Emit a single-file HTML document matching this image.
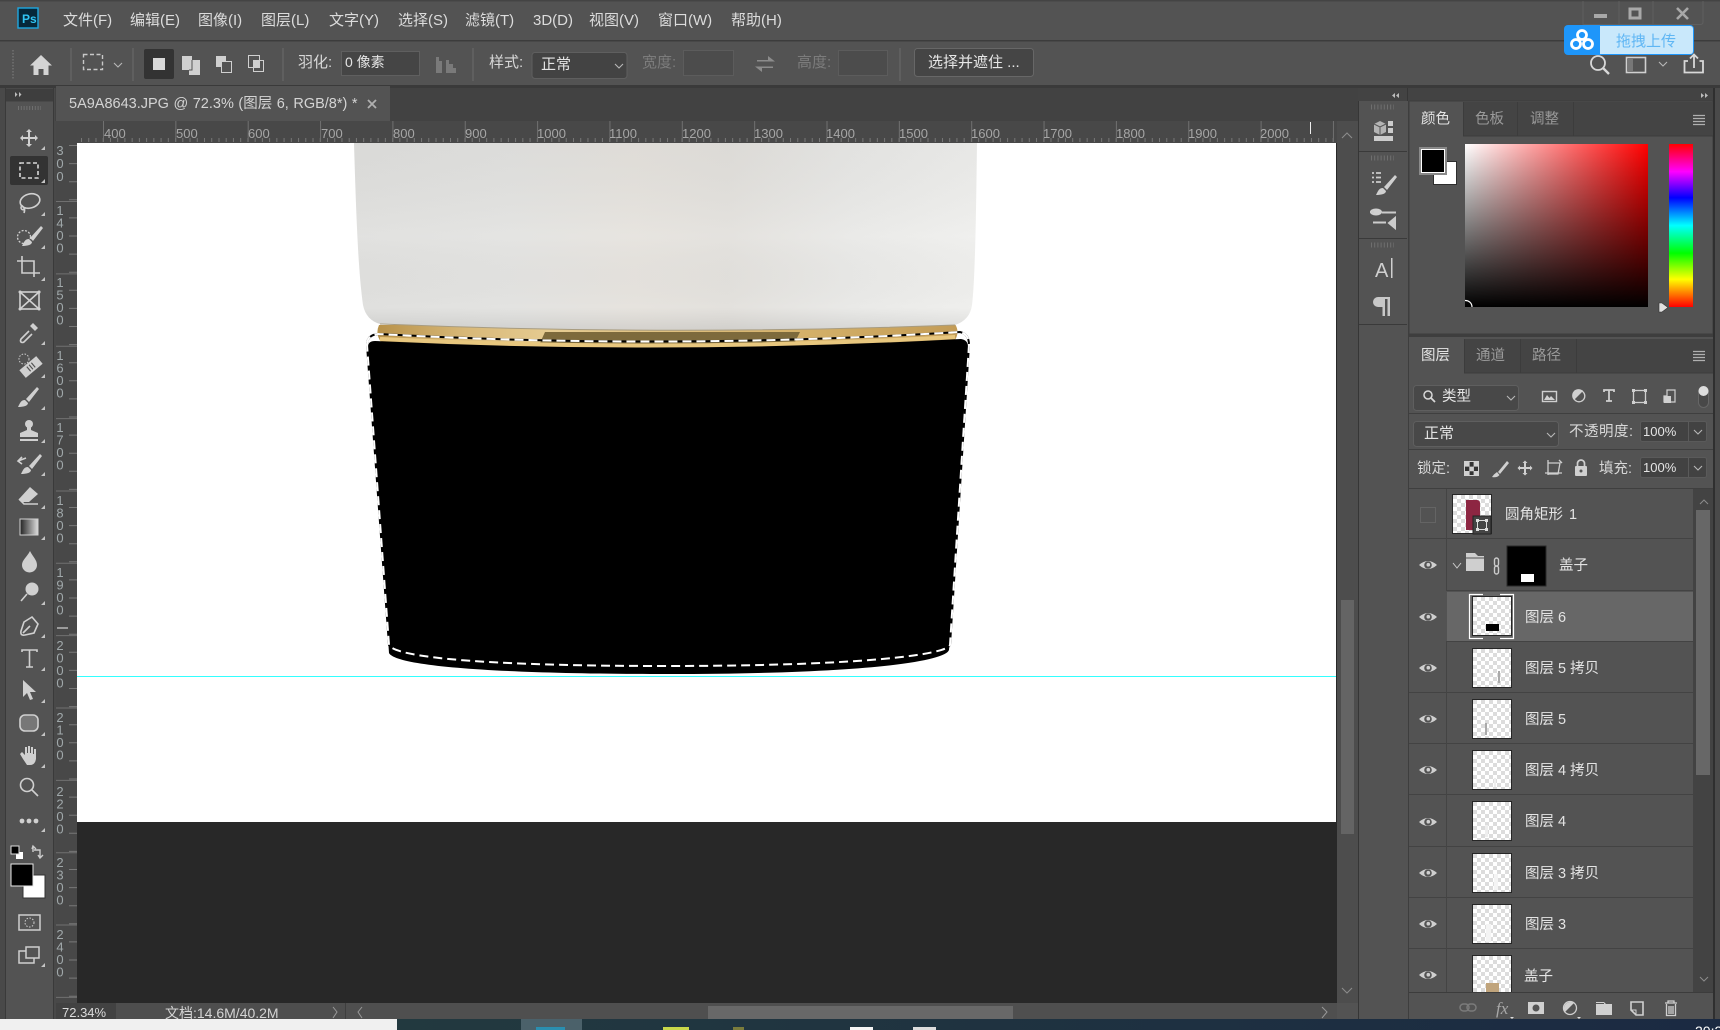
<!DOCTYPE html>
<html lang="zh"><head><meta charset="utf-8"><title>Photoshop</title>
<style>
html,body{margin:0;padding:0;background:#535353;width:1720px;height:1030px;overflow:hidden}
svg{display:block;font-family:"Liberation Sans","WenQuanYi Zen Hei","Noto Sans CJK SC",sans-serif}
.m{font-size:15px;fill:#dcdcdc}
.o{font-size:15px;fill:#d8d8d8}
.d{font-size:15px;fill:#7c7c7c}
.r{font-size:13px;fill:#a6a6a6}
.v{font-size:13px;fill:#a0a8aa;text-anchor:middle}
.l{font-size:14.5px;fill:#e4e4e4}
.tab{font-size:14.5px;fill:#9a9a9a}
.ic{fill:#d0d0d0}
.st{fill:none;stroke:#d0d0d0;stroke-width:1.6}
</style></head><body>
<svg width="1720" height="1030" viewBox="0 0 1720 1030" xmlns="http://www.w3.org/2000/svg">
<defs>
<pattern id="ck" width="8" height="8" patternUnits="userSpaceOnUse"><rect width="8" height="8" fill="#fff"/><rect width="4" height="4" fill="#dcdcdc"/><rect x="4" y="4" width="4" height="4" fill="#dcdcdc"/></pattern>
<linearGradient id="cup" x1="354" x2="977" y1="0" y2="0" gradientUnits="userSpaceOnUse"><stop offset="0" stop-color="#e0e0de"/><stop offset=".25" stop-color="#e3e3e1"/><stop offset=".45" stop-color="#e6e3de"/><stop offset=".6" stop-color="#e3e1dd"/><stop offset=".8" stop-color="#e9e9e7"/><stop offset="1" stop-color="#efefed"/></linearGradient>
<linearGradient id="shade" x1="0" x2="0" y1="143" y2="330" gradientUnits="userSpaceOnUse"><stop offset="0" stop-color="#000" stop-opacity=".03"/><stop offset=".5" stop-color="#fff" stop-opacity=".05"/><stop offset=".88" stop-color="#000" stop-opacity="0"/><stop offset="1" stop-color="#000" stop-opacity=".08"/></linearGradient>
<linearGradient id="gold" x1="379" x2="957" y1="0" y2="0" gradientUnits="userSpaceOnUse"><stop offset="0" stop-color="#b8924a"/><stop offset=".15" stop-color="#d8b878"/><stop offset=".3" stop-color="#e6cc92"/><stop offset=".7" stop-color="#d6b36c"/><stop offset="1" stop-color="#c39c56"/></linearGradient>
<linearGradient id="sat"><stop offset="0" stop-color="#fff"/><stop offset="1" stop-color="#f00"/></linearGradient>
<linearGradient id="val" x1="0" x2="0" y1="0" y2="1"><stop offset="0" stop-color="#000" stop-opacity="0"/><stop offset="1" stop-color="#000"/></linearGradient>
<linearGradient id="hue" x1="0" x2="0" y1="0" y2="1"><stop offset="0" stop-color="#f00"/><stop offset=".17" stop-color="#f0f"/><stop offset=".33" stop-color="#00f"/><stop offset=".5" stop-color="#0ff"/><stop offset=".67" stop-color="#0f0"/><stop offset=".83" stop-color="#ff0"/><stop offset="1" stop-color="#f00"/></linearGradient>
<linearGradient id="grad"><stop offset="0" stop-color="#222"/><stop offset="1" stop-color="#ddd"/></linearGradient>
<linearGradient id="task"><stop offset="0" stop-color="#22393f"/><stop offset="1" stop-color="#1b2a42"/></linearGradient>
<g id="tri"><path d="M4,0V4H0Z" fill="#c4c4c4"/></g>
<g id="eye"><path d="M-9,0Q0,-8 9,0Q0,8 -9,0Z" fill="#cfcfcf"/><circle r="3.8" fill="#535353"/><circle r="1.8" cx=".3" cy="-.3" fill="#cfcfcf"/></g>
<g id="brush"><path d="M10,-11L-1,1L2,4L12,-9Z" fill="#d0d0d0"/><path d="M-2,2C-6,2 -7,5 -9,9C-4,9 1,8 1,5Z" fill="#d0d0d0"/></g>
<g id="lth"><rect x="-1" y="-1" width="40" height="40" fill="#262626"/><rect width="38" height="38" x="0" y="0" fill="url(#ck)"/></g>
<g id="chev"><path d="M-4,-2L0,2L4,-2" fill="none" stroke="#b8b8b8" stroke-width="1.1"/></g>
<clipPath id="rows"><rect x="1409" y="489" width="284" height="503"/></clipPath>
<clipPath id="canvas"><rect x="77" y="143" width="1260" height="860"/></clipPath>
</defs>

<!-- base -->
<rect width="1720" height="1030" fill="#535353"/>
<rect y="40" width="1720" height="1.5" fill="#3c3c3c"/>
<rect y="85" width="1720" height="3" fill="#3a3a3a"/>
<rect x="0" y="0" width="1720" height="1.5" fill="#444"/>

<!-- menu -->
<rect x="18" y="8" width="20" height="20" fill="#06283a" stroke="#1fa7e0" stroke-width="1.4"/>
<text x="22" y="23" style="font-size:12px;fill:#31c5f4;font-weight:bold">Ps</text>
<text class="m" x="63" y="25">文件(F)</text>
<text class="m" x="130" y="25">编辑(E)</text>
<text class="m" x="198" y="25">图像(I)</text>
<text class="m" x="261" y="25">图层(L)</text>
<text class="m" x="329" y="25">文字(Y)</text>
<text class="m" x="398" y="25">选择(S)</text>
<text class="m" x="465" y="25">滤镜(T)</text>
<text class="m" x="533" y="25">3D(D)</text>
<text class="m" x="589" y="25">视图(V)</text>
<text class="m" x="658" y="25">窗口(W)</text>
<text class="m" x="731" y="25">帮助(H)</text>

<!-- window controls -->
<path d="M1583,1V24.5H1700Q1703,24.5 1703,22V1" fill="none" stroke="#5f5f5f"/>
<path d="M1619,1V24M1653,1V24" stroke="#5f5f5f"/>
<rect x="1594" y="14" width="13" height="4" fill="#a8a8a8"/>
<rect x="1630" y="9" width="10" height="9" fill="none" stroke="#a8a8a8" stroke-width="3"/>
<path d="M1677,8L1688,19M1688,8L1677,19" stroke="#a8a8a8" stroke-width="2.6"/>

<!-- options bar -->
<path d="M13,50v30" stroke="#6a6a6a" stroke-width="2" stroke-dasharray="1.5 1.5"/>
<path d="M41,55L30,65.5H33.5V75H38.5V69H43.5V75H48.5V65.5H52Z" fill="#d4d4d4"/>
<path d="M71,48V81M133,48V81M283,48V81M473,48V81M900,48V81" stroke="#6b6b6b"/>
<rect x="83.500" y="54.500" width="19" height="15" fill="none" stroke="#c8c8c8" stroke-width="1.4" stroke-dasharray="4 2.5"/>
<use href="#chev" x="118" y="65"/>
<rect x="144" y="49" width="30" height="30" rx="2" fill="#333"/>
<rect x="153" y="58" width="12" height="12" fill="#d8d8d8"/>
<path d="M182,56h10v4h8v15h-11v-5h-7z" fill="#d0d0d0"/><path d="M192,60v10h-3" fill="none" stroke="#535353"/>
<rect x="216" y="56" width="10" height="11" fill="#d0d0d0"/><rect x="221.500" y="61.500" width="10" height="11" fill="#535353" stroke="#d0d0d0"/>
<rect x="248.500" y="55.500" width="11" height="12" fill="none" stroke="#d0d0d0"/><rect x="253.500" y="60.500" width="10" height="11" fill="none" stroke="#d0d0d0"/><rect x="253.500" y="60.500" width="6" height="7" fill="#d0d0d0"/>
<text class="o" x="298" y="67">羽化:</text>
<rect x="341.500" y="51.500" width="78" height="24" fill="#454545" stroke="#5f5f5f"/>
<text x="345" y="67" style="font-size:14px;fill:#e4e4e4">0 像素</text>
<path d="M436,73V57H439V61H442V73ZM446,73V60H449V64H453V68H456V73Z" fill="#7a7a7a"/>
<text class="o" x="489" y="67">样式:</text>
<rect x="532" y="52.500" width="95" height="26" rx="3" fill="#434343" stroke="#5f5f5f"/>
<text x="541" y="69" style="font-size:15px;fill:#e4e4e4">正常</text>
<use href="#chev" x="619" y="66"/>
<text class="d" x="642" y="67">宽度:</text>
<rect x="683.500" y="50.500" width="50" height="25" fill="#4c4c4c" stroke="#5c5c5c"/>
<path d="M757,60H768V56L775,61.500H757ZM773,68H762V72L755,66.500H773Z" fill="#8c8c8c"/>
<text class="d" x="797" y="67">高度:</text>
<rect x="838.500" y="50.500" width="49" height="25" fill="#4c4c4c" stroke="#5c5c5c"/>
<rect x="914.500" y="48.500" width="119" height="28" rx="3" fill="#454545" stroke="#676767"/>
<text x="928" y="67" style="font-size:15px;fill:#e6e6e6">选择并遮住 ...</text>

<!-- right options icons -->
<circle cx="1598" cy="63" r="7" fill="none" stroke="#d8d8d8" stroke-width="1.8"/><path d="M1603,68L1609,74" stroke="#d8d8d8" stroke-width="2.4"/>
<rect x="1626.500" y="57.500" width="19" height="15" fill="none" stroke="#d0d0d0" stroke-width="1.6"/><rect x="1628" y="59" width="5" height="12" fill="#777"/>
<use href="#chev" x="1663" y="64"/>
<path d="M1688,61H1684.500V72.500H1703V61H1699.500M1694,68V55M1690,58.500L1694,54.500L1698,58.500" fill="none" stroke="#d8d8d8" stroke-width="1.8"/>

<!-- baidu widget -->
<rect x="1564" y="25" width="130" height="30" rx="4" fill="#1e96fa"/>
<path d="M1600,26H1690Q1693,26 1693,29V51Q1693,54 1690,54H1600Z" fill="#c9e8fb"/>
<g fill="none" stroke="#fff" stroke-width="2.8"><circle cx="1582" cy="35" r="4.500"/><circle cx="1576" cy="44" r="4.500"/><circle cx="1588" cy="44" r="4.500"/></g>
<text x="1616" y="46" style="font-size:15px;fill:#5fb6f4">拖拽上传</text>

<!-- left strip -->
<rect x="0" y="88" width="56" height="942" fill="#494949"/>
<rect x="6" y="89" width="47" height="12" fill="#3e3e3e"/>
<path d="M15,92l2.500,2.500l-2.500,2.500zM19,92l2.500,2.500l-2.500,2.500z" fill="#bdbdbd"/>
<rect x="6" y="102" width="47" height="918" fill="#535353"/>
<path d="M5.500,88V1020M53.500,88V1020" stroke="#3a3a3a"/>
<path d="M18,108H41" stroke="#6f6f6f" stroke-width="4" stroke-dasharray="1 1.800"/>

<!-- tabs -->
<rect x="55" y="88" width="1304" height="33" fill="#424242"/>
<rect x="56" y="86" width="334" height="35" fill="#535353"/>
<text x="69" y="108" style="font-size:14.5px;fill:#d4d4d4;word-spacing:.5px">5A9A8643.JPG @ 72.3% (图层 6, RGB/8*) *</text>
<path d="M368,100L376,108M376,100L368,108" stroke="#b0b0b0" stroke-width="1.8"/>

<!-- rulers -->
<rect x="56" y="121" width="1281" height="22" fill="#484848"/>
<rect x="56" y="143" width="21" height="860" fill="#484848"/>
<line x1="77" y1="140" x2="1337" y2="140" stroke="#777" stroke-width="4" stroke-dasharray="1 6.235" stroke-dashoffset="-4"/>
<line x1="103" y1="131.500" x2="1337" y2="131.500" stroke="#707070" stroke-width="21" stroke-dasharray="1 71.35"/>
<line x1="73" y1="143" x2="73" y2="1003" stroke="#777" stroke-width="8" stroke-dasharray="1 17.1" stroke-dashoffset="-2"/>
<line x1="66.500" y1="128.700" x2="66.500" y2="1003" stroke="#707070" stroke-width="21" stroke-dasharray="1 71.35"/>
<rect x="56" y="121" width="21" height="22" fill="#484848"/>
<g class="r">
<text class="r" x="104" y="138">400</text><text class="r" x="176" y="138">500</text><text class="r" x="248" y="138">600</text><text class="r" x="321" y="138">700</text><text class="r" x="393" y="138">800</text><text class="r" x="465" y="138">900</text><text class="r" x="537" y="138">1000</text><text class="r" x="609" y="138">1100</text><text class="r" x="682" y="138">1200</text><text class="r" x="754" y="138">1300</text><text class="r" x="826" y="138">1400</text><text class="r" x="899" y="138">1500</text><text class="r" x="971" y="138">1600</text><text class="r" x="1043" y="138">1700</text><text class="r" x="1116" y="138">1800</text><text class="r" x="1188" y="138">1900</text><text class="r" x="1260" y="138">2000</text>
</g>
<rect x="1310" y="122" width="1" height="12" fill="#eee"/>
<text class="v" x="60 60 60" y="155 168 181">300</text>
<text class="v" x="60 60 60 60" y="215 227.500 240 252.500">1400</text>
<text class="v" x="60 60 60 60" y="287 299.500 312 324.500">1500</text>
<text class="v" x="60 60 60 60" y="360 372.500 385 397.500">1600</text>
<text class="v" x="60 60 60 60" y="432 444.500 457 469.500">1700</text>
<text class="v" x="60 60 60 60" y="505 517.500 530 542.500">1800</text>
<text class="v" x="60 60 60 60" y="577 589.500 602 614.500">1900</text>
<text class="v" x="60 60 60 60" y="650 662.500 675 687.500">2000</text>
<text class="v" x="60 60 60 60" y="722 734.500 747 759.500">2100</text>
<text class="v" x="60 60 60 60" y="796 808.500 821 833.500">2200</text>
<text class="v" x="60 60 60 60" y="867 879.500 892 904.500">2300</text>
<text class="v" x="60 60 60 60" y="939 951.500 964 976.500">2400</text>
<rect x="57" y="627.500" width="11" height="1" fill="#eee"/>

<!-- canvas -->
<rect x="77" y="143" width="1260" height="860" fill="#282828"/>
<rect x="77" y="143" width="1259" height="679" fill="#fff"/>
<g clip-path="url(#canvas)">
<path d="M379,325Q375,334 381,342Q667,358 955,340Q960,332 955,324Z" fill="url(#gold)"/>
<path d="M545,332H800L795,342Q667,346 540,343Z" fill="#7d6a3c"/>
<path d="M354,143H977C976,220 975,280 972,305Q970,320 955,325Q667,336 380,324Q366,320 363,305C358,270 356,210 354,143Z" fill="url(#cup)"/>
<path d="M354,143H977C976,220 975,280 972,305Q970,320 955,325Q667,336 380,324Q366,320 363,305C358,270 356,210 354,143Z" fill="url(#shade)"/>
<path d="M380,324Q667,336 955,325" fill="none" stroke="#a89c80" stroke-width="1"/>
<path d="M380,339Q667,353 955,337" fill="none" stroke="#e8c77e" stroke-width="4"/>
<path d="M368,347Q368,341 375,341Q667,355 961,339Q968,340 968,347L949,650C945,662 860,674 667,674C480,674 395,665 389,653Z" fill="#000"/>
<path d="M367,345Q367,335 378,334Q667,350 960,332Q969,334 969,345L950,645C946,655 860,666 667,666C480,666 395,657 389,645Z" fill="none" stroke="#000" stroke-width="2"/>
<path d="M367,345Q367,335 378,334Q667,350 960,332Q969,334 969,345L950,645C946,655 860,666 667,666C480,666 395,657 389,645Z" fill="none" stroke="#fff" stroke-width="2" stroke-dasharray="9 5"/>
<rect x="77" y="676" width="1259" height="1" fill="#33ffff"/>
</g>

<!-- tools -->
<g>
<path transform="translate(29,138)" d="M0,-9L3,-6H1V-1H6V-3L9,0L6,3V1H1V6H3L0,9L-3,6H-1V1H-6V3L-9,0L-6,-3V-1H-1V-6H-3Z" class="ic"/><use href="#tri" x="41" y="146"/>
<rect x="10" y="156" width="38" height="29" rx="2" fill="#333"/>
<rect x="20" y="163" width="18" height="15" fill="none" stroke="#d8d8d8" stroke-width="1.6" stroke-dasharray="4 2.500"/><use href="#tri" x="41" y="179"/>
<ellipse cx="30" cy="201" rx="10" ry="7" transform="rotate(-15 30 201)" class="st"/><path d="M21,205Q26,208 24,213M22,206a2,2 0 1,0 3,2" class="st"/><use href="#tri" x="41" y="212"/>
<circle cx="24" cy="237" r="6.500" fill="none" stroke="#d0d0d0" stroke-width="1.3" stroke-dasharray="2 1.500"/><use href="#brush" x="31" y="237"/><use href="#tri" x="41" y="245"/>
<path d="M17,261H34V277M22,256V273H40" class="st" stroke-width="2"/><use href="#tri" x="41" y="277"/>
<rect x="20" y="292" width="19" height="17" class="st"/><path d="M20,292L39,309M39,292L20,309" class="st"/><path d="M20,292h.1M39,292h.1M20,309h.1M39,309h.1" stroke="#d0d0d0" stroke-width="3" stroke-linecap="round"/>
<path d="M29,331L21,339Q20,341 21,342Q22,343 24,342L32,334" class="st"/><path d="M33,323l5,5-3,3-5-5z" class="ic"/><use href="#tri" x="41" y="341"/>
<path transform="translate(31,367) rotate(-40)" d="M-11,-5H11V5H-11Z" class="ic"/><path transform="translate(31,367) rotate(-40)" d="M-3,-3V3M0,-3V3M3,-3V3" stroke="#535353" stroke-width="1.200"/><circle cx="24" cy="359" r="5" fill="none" stroke="#d0d0d0" stroke-dasharray="1.500 1.500"/><use href="#tri" x="41" y="374"/>
<use href="#brush" x="27" y="398"/><use href="#tri" x="41" y="406"/>
<circle cx="29" cy="424" r="4" class="ic"/><path d="M27,427H31V430L38,433V437H20V433L27,430ZM20,439H38V441H20Z" class="ic"/><use href="#tri" x="41" y="439"/>
<use href="#brush" x="30" y="465"/><path d="M18,461L26,458M22,457L18,461L22,464" class="st"/><use href="#tri" x="41" y="472"/>
<path d="M30,487L38,494L29,502H22L19,499Z" class="ic"/><path d="M19,499L24,504H38" class="st"/><use href="#tri" x="41" y="505"/>
<rect x="20" y="519" width="18" height="16" fill="url(#grad)" stroke="#d0d0d0"/><use href="#tri" x="41" y="536"/>
<path d="M30,551C33,557 37,560 37,565A7.500,7.500 0 0,1 22,565C22,560 27,557 30,551Z" class="ic"/>
<circle cx="32" cy="589" r="6.500" class="ic"/><path d="M27,594L21,601" class="st" stroke-width="2.400"/><use href="#tri" x="41" y="601"/>
<path d="M32,617L38,624L34,633L25,635Q20,636 21,631L24,622Z" class="st"/><path d="M23,633L30,626" class="st"/><use href="#tri" x="41" y="634"/>
<path d="M22,652V650H37V652M29.500,650V667M26,667H33" class="st" stroke-width="2.200"/><use href="#tri" x="41" y="667"/>
<path d="M23,680V697L27,693L30,700L33,699L30,692H36Z" class="ic"/><use href="#tri" x="41" y="699"/>
<rect x="20" y="715" width="18" height="16" rx="5" fill="#777" stroke="#d0d0d0" stroke-width="1.600"/><use href="#tri" x="41" y="732"/>
<path d="M23,759L20,754L22,752L25,755V747H27V753H28V746H30V753H31V747H33V754H34V749H36V759Q35,765 30,765H27Z" class="ic"/><use href="#tri" x="41" y="764"/>
<circle cx="27" cy="785" r="6.500" class="st"/><path d="M32,790L38,796" class="st" stroke-width="2.400"/>
<circle cx="22" cy="821" r="2.400" class="ic"/><circle cx="29" cy="821" r="2.400" class="ic"/><circle cx="36" cy="821" r="2.400" class="ic"/><use href="#tri" x="41" y="828"/>
<rect x="16" y="852" width="7" height="7" fill="#fff"/><rect x="11" y="846" width="8" height="8" fill="#000" stroke="#ddd"/>
<path d="M34,850H40V857M33,846V852M32,849L33,846L36,849M38,855L40,858L43,855" fill="none" stroke="#ccc" stroke-width="1.400"/>
<rect x="23" y="875" width="22" height="23" fill="#fff" stroke="#333"/>
<rect x="11" y="864" width="22" height="22" fill="#000" stroke="#e8e8e8"/>
<rect x="19" y="915" width="21" height="15" fill="#555" stroke="#cfcfcf" stroke-width="1.500"/><circle cx="29.500" cy="922.500" r="4.500" fill="none" stroke="#d0d0d0" stroke-dasharray="1.500 1.500"/>
<rect x="19" y="951" width="15" height="12" fill="none" stroke="#cfcfcf" stroke-width="1.500"/><rect x="26" y="947" width="13" height="11" fill="#535353" stroke="#cfcfcf" stroke-width="1.500"/><use href="#tri" x="41" y="963"/>
</g>

<!-- vertical scrollbar -->
<rect x="1337" y="121" width="21" height="882" fill="#4d4d4d"/>
<path d="M1342,138L1347,133L1352,138M1342,988L1347,993L1352,988" fill="none" stroke="#8c8c8c" stroke-width="1.100"/>
<rect x="1341" y="600" width="13" height="234" fill="#646464"/>

<!-- status bar -->
<rect x="56" y="1003" width="60" height="16" fill="#424242"/>
<rect x="116" y="1003" width="230" height="16" fill="#4e4e4e"/>
<rect x="346" y="1003" width="1012" height="16" fill="#4f4f4f"/>
<rect x="345" y="1003" width="1" height="16" fill="#3e3e3e"/>
<text x="62" y="1017" style="font-size:13px;fill:#dcdcdc">72.34%</text>
<text x="165" y="1018" style="font-size:14px;fill:#d4d4d4">文档:14.6M/40.2M</text>
<path d="M333,1007L337,1012L333,1018M362,1007L358,1012L362,1018M1322,1007L1327,1012L1322,1018" fill="none" stroke="#999"/>
<rect x="708" y="1006" width="305" height="13" fill="#686868"/>
<rect x="1337" y="1003" width="21" height="16" fill="#535353"/>

<!-- right dock -->
<rect x="1358" y="88" width="362" height="13" fill="#434343"/>
<path d="M1399,93l-3,2.500l3,2.500zM1395,93l-3,2.500l3,2.500zM1701,93l3,2.500l-3,2.500zM1705,93l3,2.500l-3,2.500z" fill="#bdbdbd"/>
<path d="M1407.500,88V101" stroke="#363636"/>
<rect x="1358" y="101" width="1" height="918" fill="#363636"/>
<rect x="1408" y="101" width="1" height="918" fill="#3e3e3e"/>
<path d="M1359,151.500H1407M1359,238.500H1407M1359,324.500H1407" stroke="#3a3a3a"/>
<path d="M1371,107H1394M1371,158H1394M1371,245H1394" stroke="#6f6f6f" stroke-width="5" stroke-dasharray="1 2.200"/>
<path d="M1380,121L1386,124V132L1380,135L1374,132V124Z" fill="#b4b4b4"/><path d="M1374,124L1380,127L1386,124M1380,127V135" fill="none" stroke="#535353"/><rect x="1388" y="121" width="5" height="5" fill="#ccc"/><rect x="1388" y="128" width="5" height="5" fill="#ccc"/><rect x="1374" y="136" width="19" height="5" fill="#ccc"/>
<path d="M1372,173h2M1376,173h5M1372,177.500h2M1376,177.500h5M1372,182h2M1376,182h5" stroke="#ccc" stroke-width="1.800"/><use href="#brush" x="1385" y="186"/>
<ellipse cx="1376" cy="212" rx="6" ry="3.500" class="ic"/><path d="M1370,212H1374M1382,212.500H1396" stroke="#ccc" stroke-width="2" fill="none"/><path d="M1373,222.500H1386M1389,223L1395,218V228Z" stroke="#ccc" stroke-width="2" fill="#ccc"/>
<text x="1375" y="277" style="font-size:20px;fill:#cfcfcf">A</text><rect x="1391" y="258" width="1.500" height="20" fill="#cfcfcf"/>
<path d="M1378,297H1390V316H1387.500V299H1385V316H1382.500V307H1378A5,5 0 0,1 1378,297Z" fill="#c8c8c8"/>

<!-- color panel -->
<rect x="1409" y="101" width="304" height="233" fill="#535353" stroke="#3e3e3e"/>
<rect x="1463" y="102" width="250" height="34" fill="#444"/>
<path d="M1463.500,102V136M1517.500,102V136M1573.500,102V136" stroke="#3c3c3c"/>
<rect x="1463" y="135.500" width="250" height="1" fill="#3c3c3c"/>
<text class="l" x="1421" y="123.500">颜色</text>
<text class="tab" x="1475" y="123.500">色板</text>
<text class="tab" x="1530" y="123.500">调整</text>
<path d="M1693,115.500H1705M1693,118.500H1705M1693,121.500H1705M1693,124.500H1705" stroke="#b0b0b0" stroke-width="1.200"/>
<rect x="1433.500" y="161.500" width="23" height="23" fill="#fff" stroke="#2d2d2d"/>
<rect x="1419" y="147" width="28" height="28" fill="#8a8a8a"/>
<rect x="1421.500" y="149.500" width="23" height="23" fill="#000" stroke="#fff"/>
<rect x="1465" y="144" width="183" height="163" fill="url(#sat)"/>
<rect x="1465" y="144" width="183" height="163" fill="url(#val)"/>
<path d="M1465,300.500A6.500,6.500 0 0,1 1472,307" fill="none" stroke="#fff" stroke-width="1.200"/>
<rect x="1669" y="144" width="24" height="163" fill="url(#hue)"/>
<path d="M1659,303H1662L1668,307.500L1662,312H1659Z" fill="#e0e0e0" stroke="#333" stroke-width=".6"/>

<rect x="1409" y="334" width="311" height="3" fill="#3e3e3e"/>

<!-- layers panel -->
<rect x="1409" y="338" width="304" height="681" fill="#535353"/>
<rect x="1464" y="339" width="249" height="34" fill="#444"/>
<path d="M1464.500,339V373M1520.500,339V373M1576.500,339V373" stroke="#3c3c3c"/>
<rect x="1464" y="372.500" width="249" height="1" fill="#3c3c3c"/>
<rect x="1713" y="88" width="2" height="931" fill="#2f2f2f"/><rect x="1715" y="88" width="5" height="942" fill="#4a4a4a"/>
<text class="l" x="1421" y="360">图层</text>
<text class="tab" x="1476" y="360">通道</text>
<text class="tab" x="1532" y="360">路径</text>
<path d="M1693,351.500H1705M1693,354.500H1705M1693,357.500H1705M1693,360.500H1705" stroke="#b0b0b0" stroke-width="1.200"/>

<!-- filter row -->
<rect x="1413.500" y="385.500" width="105" height="25" rx="3" fill="#484848" stroke="#5f5f5f"/>
<circle cx="1428" cy="395" r="4" fill="none" stroke="#d8d8d8" stroke-width="1.500"/><path d="M1431,398L1435,402" stroke="#d8d8d8" stroke-width="1.800"/>
<text class="l" x="1442" y="401">类型</text>
<use href="#chev" x="1511" y="398"/>
<rect x="1542.500" y="391.500" width="14" height="10" fill="none" stroke="#cfcfcf" stroke-width="1.400"/><path d="M1544,400L1547,395L1549.500,398L1551,396L1555,400Z" class="ic"/>
<circle cx="1579" cy="396" r="5.800" fill="none" stroke="#cfcfcf" stroke-width="1.300"/><path d="M1574,400A6,6 0 0,1 1583,391Z" class="ic"/>
<path d="M1604,392V390H1614V392M1609,390V401M1606,401H1612" fill="none" stroke="#cfcfcf" stroke-width="1.800"/>
<rect x="1633.500" y="390.500" width="12" height="12" fill="none" stroke="#cfcfcf" stroke-width="1.300"/><path d="M1632,389h3v3h-3zM1644,389h3v3h-3zM1632,401h3v3h-3zM1644,401h3v3h-3z" fill="#cfcfcf"/>
<path d="M1667,390H1675V402H1664V396H1667Z" fill="none" stroke="#cfcfcf" stroke-width="1.200"/><rect x="1664" y="396" width="7" height="7" class="ic"/>
<rect x="1698.500" y="386.500" width="10" height="21" rx="5" fill="#484848" stroke="#666"/><circle cx="1703.500" cy="391" r="5" fill="#ddd"/>
<path d="M1409,413.500H1713M1409,449.500H1713M1409,488.500H1713" stroke="#3f3f3f"/>

<!-- blend row -->
<rect x="1413.500" y="421.500" width="145" height="25" rx="3" fill="#484848" stroke="#5f5f5f"/>
<text class="l" x="1424" y="438" style="font-size:15px">正常</text>
<use href="#chev" x="1551" y="435"/>
<text class="o" x="1569" y="436" style="font-size:14.5px;letter-spacing:.5px">不透明度:</text>
<rect x="1640.500" y="421.500" width="66" height="20" rx="2" fill="#424242" stroke="#5a5a5a"/><path d="M1688.500,422V441" stroke="#5a5a5a"/>
<text x="1643" y="436" style="font-size:13px;fill:#e4e4e4">100%</text>
<use href="#chev" x="1698" y="432"/>

<!-- lock row -->
<text class="o" x="1417" y="473" style="font-size:14.5px">锁定:</text>
<rect x="1464.500" y="461.500" width="14" height="14" fill="#333" stroke="#d0d0d0"/><path d="M1465,462h4.600v4.600h-4.600zM1473.600,462h4.600v4.600h-4.600zM1469.300,466.600h4.600v4.600h-4.600zM1465,471h4.600v4.600h-4.600zM1473.600,471h4.600v4.600h-4.600z" fill="#d0d0d0"/>
<path d="M1507,461L1498,472L1500,474L1509,463ZM1497,472Q1494,474 1492,477Q1497,478 1499.500,475Z" class="ic"/>
<path transform="translate(1525,468)" d="M0,-7.500L2.500,-5H1V-1H5V-2.500L7.500,0L5,2.500V1H1V5H2.500L0,7.500L-2.500,5H-1V1H-5V2.500L-7.500,0L-5,-2.500V-1H-1V-5H-2.500Z" class="ic"/>
<path d="M1548,463H1560L1558,474H1548M1548,460V475M1545,473H1562M1559,460L1562,463" fill="none" stroke="#cfcfcf" stroke-width="1.300"/>
<rect x="1575" y="466" width="12" height="10" rx="1" class="ic"/><path d="M1577.500,466V463.500A3.500,3.500 0 0,1 1584.500,463.500V466" fill="none" stroke="#cfcfcf" stroke-width="1.700"/><circle cx="1581" cy="471" r="1.500" fill="#535353"/>
<text class="o" x="1599" y="473" style="font-size:14.5px">填充:</text>
<rect x="1640.500" y="457.500" width="66" height="20" rx="2" fill="#424242" stroke="#5a5a5a"/><path d="M1688.500,458V477" stroke="#5a5a5a"/>
<text x="1643" y="472" style="font-size:13px;fill:#e4e4e4">100%</text>
<use href="#chev" x="1698" y="468"/>

<!-- layer list -->
<rect x="1693" y="489" width="20" height="503" fill="#434343"/>
<path d="M1700,504L1704,500L1708,504M1700,977L1704,981L1708,977" fill="none" stroke="#8c8c8c"/>
<rect x="1696" y="510" width="14" height="265" fill="#676767"/>
<g clip-path="url(#rows)">
<rect x="1447" y="592" width="246" height="49" fill="#676767"/>
<path d="M1409,538.500H1693M1447,590.500H1693M1447,641.500H1693M1409,692.500H1693M1409,743.500H1693M1409,794.500H1693M1409,846.500H1693M1409,897.500H1693M1409,948.500H1693" stroke="#434343"/>
<path d="M1446.500,489V992" stroke="#444"/>
<rect x="1420.500" y="507.500" width="15" height="15" fill="none" stroke="#646464"/>
<use href="#lth" x="1453" y="495"/>
<path d="M1466,500H1477Q1480,500 1480,503V518L1477,530H1466Z" fill="#8d2642"/>
<rect x="1473" y="516" width="18" height="18" fill="#454545" stroke="#222"/><rect x="1477.500" y="520.500" width="9" height="9" fill="none" stroke="#ddd"/><path d="M1476,519h3v3h-3zM1485,519h3v3h-3zM1476,528h3v3h-3zM1485,528h3v3h-3z" fill="#ddd"/>
<text class="l" x="1505" y="519" style="word-spacing:2px">圆角矩形 1</text>

<use href="#eye" x="1428" y="565"/>
<path d="M1453,563L1457,568L1461,563" fill="none" stroke="#ccc"/>
<path d="M1466,553H1475L1478,556H1484V571H1466Z" fill="#cfcfcf"/><path d="M1466,558H1484" stroke="#535353"/>
<rect x="1494.500" y="558" width="4" height="8" rx="2" fill="none" stroke="#ccc" stroke-width="1.400"/><rect x="1494.500" y="566" width="4" height="8" rx="2" fill="none" stroke="#ccc" stroke-width="1.400"/>
<rect x="1507" y="546" width="39" height="40" fill="#000" stroke="#2a2a2a"/>
<rect x="1521" y="574" width="13" height="8" fill="#fff"/>
<text class="l" x="1559" y="570">盖子</text>

<rect x="1409" y="591" width="38" height="50" fill="#535353"/>
<use href="#eye" x="1428" y="617"/>
<use href="#lth" x="1473" y="597"/>
<rect x="1486" y="624" width="13" height="7" fill="#000"/>
<path d="M1483,594.500H1469.500V638.500H1483M1500,594.500H1513.500V638.500H1500" fill="none" stroke="#fff" stroke-width="1.200"/>
<text class="l" x="1525" y="622">图层 6</text>

<use href="#eye" x="1428" y="668"/>
<use href="#lth" x="1473" y="649"/>
<rect x="1498" y="671" width="2" height="12" fill="#aaa"/>
<text class="l" x="1525" y="673">图层 5 拷贝</text>

<use href="#eye" x="1428" y="719"/>
<use href="#lth" x="1473" y="700"/>
<rect x="1485" y="723" width="2" height="12" fill="#aaa"/>
<text class="l" x="1525" y="724">图层 5</text>

<use href="#eye" x="1428" y="770"/>
<use href="#lth" x="1473" y="751"/>
<rect x="1494" y="778" width="2" height="9" fill="#eee"/>
<text class="l" x="1525" y="775">图层 4 拷贝</text>

<use href="#eye" x="1428" y="822"/>
<use href="#lth" x="1473" y="802"/>
<rect x="1485" y="825" width="3" height="12" fill="#eee"/>
<text class="l" x="1525" y="826">图层 4</text>

<use href="#eye" x="1428" y="873"/>
<use href="#lth" x="1473" y="854"/>
<rect x="1494" y="874" width="4" height="16" fill="#f4f4f4"/>
<text class="l" x="1525" y="878">图层 3 拷贝</text>

<use href="#eye" x="1428" y="924"/>
<use href="#lth" x="1473" y="905"/>
<rect x="1486" y="924" width="5" height="18" fill="#f4f4f4"/>
<text class="l" x="1525" y="929">图层 3</text>

<use href="#eye" x="1428" y="975"/>
<use href="#lth" x="1473" y="956"/>
<rect x="1486" y="983" width="13" height="9" fill="#c0a47c"/>
<text class="l" x="1524" y="981">盖子</text>
</g>
<rect x="1409" y="992" width="304" height="1" fill="#3c3c3c"/>

<!-- layer footer -->
<rect x="1460" y="1004" width="9" height="7" rx="3.500" fill="none" stroke="#7b7b7b" stroke-width="1.500"/><rect x="1467" y="1004" width="9" height="7" rx="3.500" fill="none" stroke="#7b7b7b" stroke-width="1.500"/>
<text x="1496" y="1014" style="font-family:'Liberation Serif',serif;font-style:italic;font-size:17px;fill:#a8a8a8">fx</text>
<path d="M1510,1017h4l-2,2z" fill="#ddd"/>
<rect x="1528" y="1002" width="16" height="12" fill="#d0d0d0"/><circle cx="1536" cy="1008" r="3.500" fill="#535353"/>
<circle cx="1570" cy="1008" r="6.500" fill="none" stroke="#cfcfcf" stroke-width="1.300"/><path d="M1565,1012A6.500,6.500 0 0,1 1574,1003Z" class="ic"/>
<path d="M1577,1017h4l-2,2z" fill="#ddd"/>
<path d="M1596,1002H1604L1606,1004H1612V1015H1596Z" fill="#d0d0d0"/><path d="M1596,1003.500H1604" stroke="#535353"/>
<path d="M1631,1002H1643V1015H1636L1631,1010Z" fill="none" stroke="#d0d0d0" stroke-width="1.600"/><path d="M1631,1010H1636V1015" fill="none" stroke="#d0d0d0"/>
<path d="M1665,1003H1677M1668,1003V1001H1674V1003M1666.500,1004V1015.500H1675.500V1004M1669,1006V1014M1671,1006V1014M1673,1006V1014" fill="none" stroke="#d0d0d0" stroke-width="1.300"/>

<!-- taskbar -->
<rect y="1019" width="397" height="11" fill="#f0f0f0"/>
<rect x="397" y="1019" width="1323" height="11" fill="url(#task)"/>
<rect x="521" y="1019" width="61" height="11" fill="#4b616a"/>
<rect x="536" y="1027" width="29" height="3" fill="#2a8fb0"/>
<rect x="663" y="1027" width="26" height="3" fill="#c9d84a"/>
<rect x="733" y="1027" width="11" height="3" fill="#7a7c3c"/>
<rect x="850" y="1027" width="23" height="3" fill="#f4f4f4"/>
<rect x="913" y="1027" width="23" height="3" fill="#dcdcdc"/>
<text x="1695" y="1036" style="font-size:14px;fill:#fff">20:2</text>
</svg>
</body></html>
